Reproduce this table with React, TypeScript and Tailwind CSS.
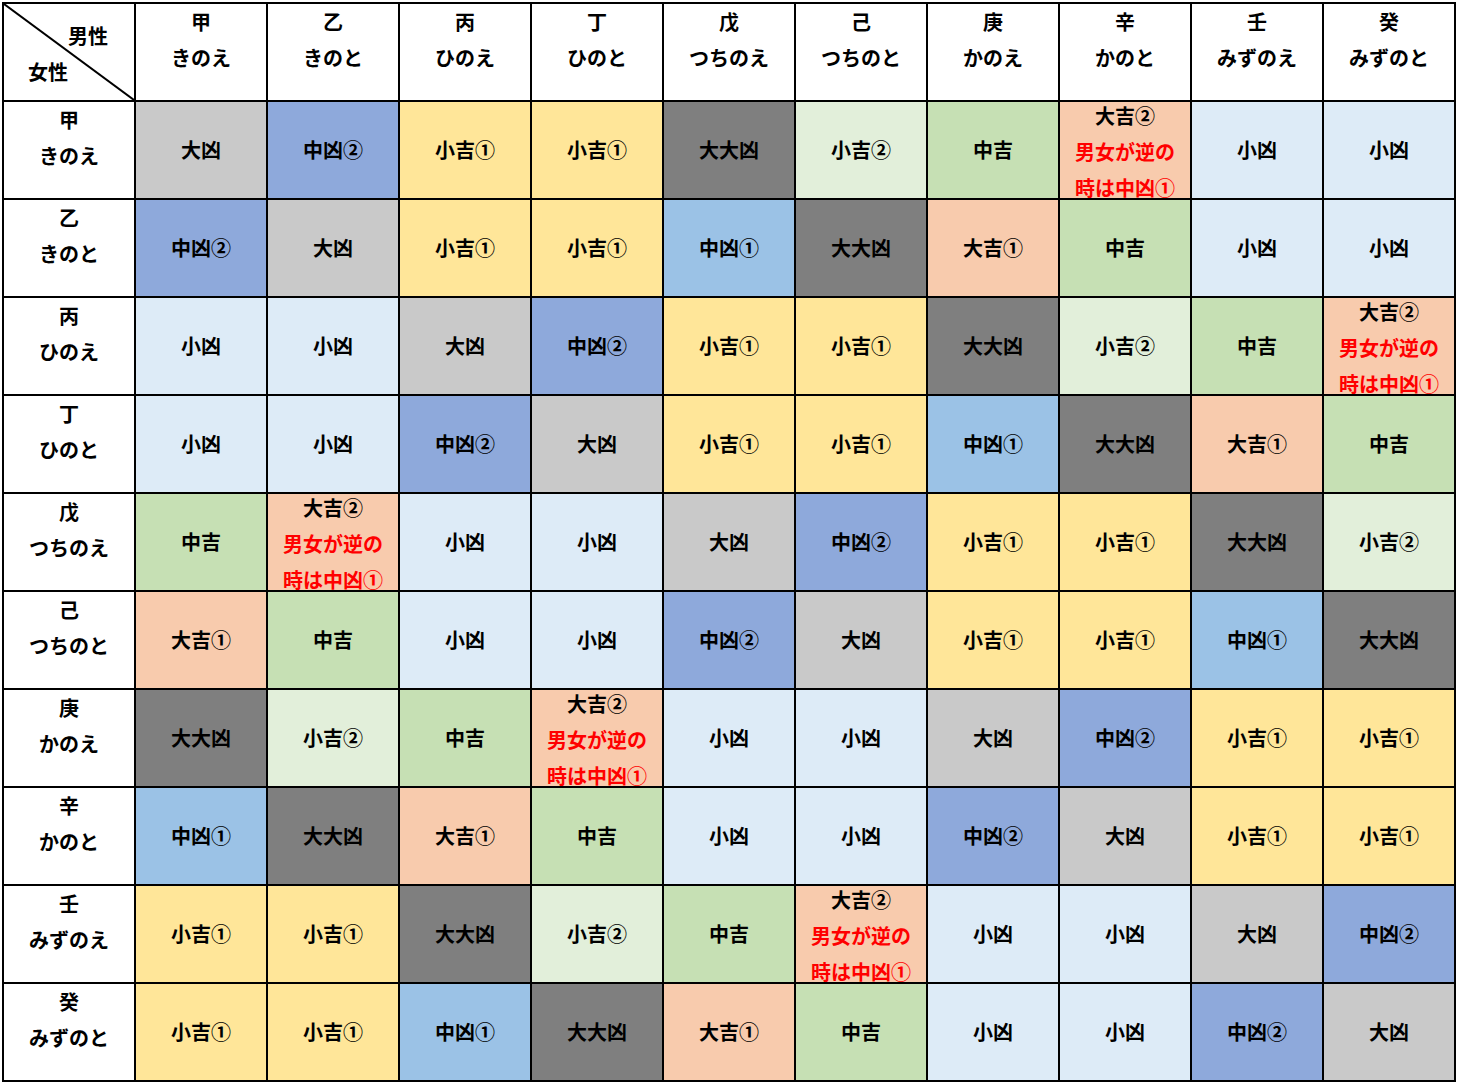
import React from "react";

const stems = [
  { kanji: "甲", kana: "きのえ" },
  { kanji: "乙", kana: "きのと" },
  { kanji: "丙", kana: "ひのえ" },
  { kanji: "丁", kana: "ひのと" },
  { kanji: "戊", kana: "つちのえ" },
  { kanji: "己", kana: "つちのと" },
  { kanji: "庚", kana: "かのえ" },
  { kanji: "辛", kana: "かのと" },
  { kanji: "壬", kana: "みずのえ" },
  { kanji: "癸", kana: "みずのと" },
];

// result -> cell background
const colors: Record<string, string> = {
  "大凶": "bg-[#c9c9c9]",
  "中凶②": "bg-[#8ea9db]",
  "小吉①": "bg-[#ffe699]",
  "大大凶": "bg-[#7f7f7f]",
  "小吉②": "bg-[#e2efda]",
  "中吉": "bg-[#c6e0b4]",
  "大吉①": "bg-[#f8cbad]",
  "X": "bg-[#f8cbad]",
  "小凶": "bg-[#ddebf7]",
  "中凶①": "bg-[#9bc2e6]",
};

// rows = 女性, columns = 男性 ; "X" = 大吉② / 男女が逆の時は中凶①
const grid: string[][] = [
  ["大凶", "中凶②", "小吉①", "小吉①", "大大凶", "小吉②", "中吉", "X", "小凶", "小凶"],
  ["中凶②", "大凶", "小吉①", "小吉①", "中凶①", "大大凶", "大吉①", "中吉", "小凶", "小凶"],
  ["小凶", "小凶", "大凶", "中凶②", "小吉①", "小吉①", "大大凶", "小吉②", "中吉", "X"],
  ["小凶", "小凶", "中凶②", "大凶", "小吉①", "小吉①", "中凶①", "大大凶", "大吉①", "中吉"],
  ["中吉", "X", "小凶", "小凶", "大凶", "中凶②", "小吉①", "小吉①", "大大凶", "小吉②"],
  ["大吉①", "中吉", "小凶", "小凶", "中凶②", "大凶", "小吉①", "小吉①", "中凶①", "大大凶"],
  ["大大凶", "小吉②", "中吉", "X", "小凶", "小凶", "大凶", "中凶②", "小吉①", "小吉①"],
  ["中凶①", "大大凶", "大吉①", "中吉", "小凶", "小凶", "中凶②", "大凶", "小吉①", "小吉①"],
  ["小吉①", "小吉①", "大大凶", "小吉②", "中吉", "X", "小凶", "小凶", "大凶", "中凶②"],
  ["小吉①", "小吉①", "中凶①", "大大凶", "大吉①", "中吉", "小凶", "小凶", "中凶②", "大凶"],
];

export default function App() {
  return (
    <div
      className="min-h-screen bg-white text-black font-bold text-[20px]"
      style={{ fontFamily: '"Noto Sans CJK JP", "Noto Sans", sans-serif' }}
    >
      <div className="pt-[2px] pl-[2px]">
        <div className="inline-grid grid-cols-[repeat(11,130px)] grid-rows-[repeat(11,96px)] gap-[2px] p-[2px] bg-black">
          <CornerCell />
          {stems.map((s) => (
            <StemCell key={"h" + s.kanji} kanji={s.kanji} kana={s.kana} />
          ))}
          {grid.map((row, r) => (
            <React.Fragment key={r}>
              <StemCell kanji={stems[r].kanji} kana={stems[r].kana} />
              {row.map((v, c) => (
                <ResultCell key={c} value={v} />
              ))}
            </React.Fragment>
          ))}
        </div>
      </div>
    </div>
  );
}

function CornerCell() {
  return (
    <div className="relative bg-white">
      <svg className="absolute inset-0" width="130" height="96" viewBox="0 0 130 96">
        <line x1="0" y1="0" x2="130" y2="96" stroke="black" strokeWidth="2" />
      </svg>
      <div className="relative h-full">
        <div className="pt-[20px] pl-[64px] leading-[24px]">男性</div>
        <div className="pt-[12px] pl-[24px] leading-[24px]">女性</div>
      </div>
    </div>
  );
}

function StemCell({ kanji, kana }: { kanji: string; kana: string }) {
  return (
    <div className="bg-white flex flex-col items-center leading-[36px]">
      <div>{kanji}</div>
      <div>{kana}</div>
    </div>
  );
}

function ResultCell({ value }: { value: string }) {
  if (value === "X") {
    return (
      <div className={`${colors[value]} flex flex-col items-center leading-[36px]`}>
        <div className="-mt-[4px]">大吉②</div>
        <div className="text-[#ff0000]">男女が逆の</div>
        <div className="text-[#ff0000]">時は中凶①</div>
      </div>
    );
  }
  return (
    <div className={`${colors[value]} flex items-center justify-center`}>
      {value}
    </div>
  );
}
